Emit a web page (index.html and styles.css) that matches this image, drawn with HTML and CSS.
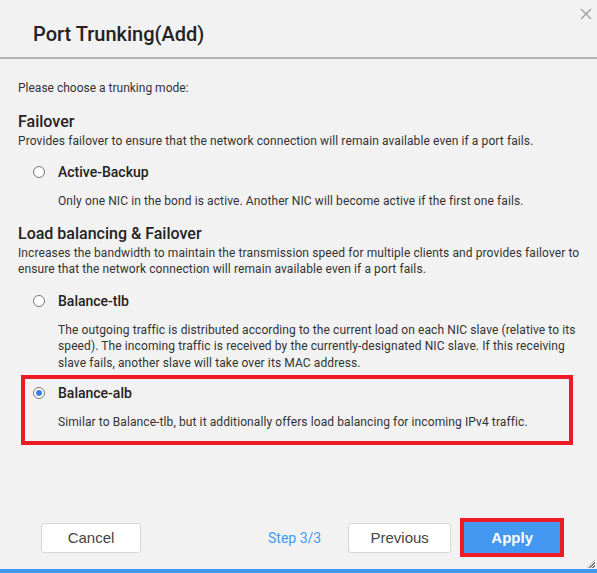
FILE: index.html
```html
<!DOCTYPE html>
<html lang="en-US">
  <head>
    <title>Port Trunking(Add)</title>
    <link rel="stylesheet" href="styles.css">
  </head>
  <body>
    <div class="dialog">
      <div class="dialog-header">
        <h1>Port Trunking(Add)</h1>
        <span class="close" aria-label="Close">
          <svg width="12" height="12" viewBox="0 0 12 12"><path d="M1 1L11 11M11 1L1 11" stroke="#9a9a9a" stroke-width="1.2" fill="none"/></svg>
        </span>
      </div>

      <div class="dialog-body">
        <p class="intro">Please choose a trunking mode:</p>

        <h2>Failover</h2>
        <p class="group-desc">Provides failover to ensure that the network connection will remain available even if a port fails.</p>

        <div class="option">
          <label class="option-title"><span class="radio"></span>Active-Backup</label>
          <p class="option-desc">Only one NIC in the bond is active. Another NIC will become active if the first one fails.</p>
        </div>

        <h2 class="spaced">Load balancing &amp; Failover</h2>
        <p class="group-desc">Increases the bandwidth to maintain the transmission speed for multiple clients and provides failover to ensure that the network connection will remain available even if a port fails.</p>

        <div class="option">
          <label class="option-title"><span class="radio"></span>Balance-tlb</label>
          <p class="option-desc">The outgoing traffic is distributed according to the current load on each NIC slave (relative to its speed). The incoming traffic is received by the currently-designated NIC slave. If this receiving slave fails, another slave will take over its MAC address.</p>
        </div>

        <div class="option selected">
          <label class="option-title"><span class="radio checked"></span>Balance-alb</label>
          <p class="option-desc">Similar to Balance-tlb, but it additionally offers load balancing for incoming IPv4 traffic.</p>
        </div>
      </div>

      <div class="dialog-footer">
        <button class="btn">Cancel</button>
        <span class="step">Step 3/3</span>
        <button class="btn wide">Previous</button>
        <span class="highlight"><button class="btn primary">Apply</button></span>
      </div>
      <span class="grip"></span>
    </div>
  </body>
</html>
```

FILE: styles.css
```css
html, body {
  margin: 0;
  padding: 0;
}

body {
  font-family: Roboto, "Liberation Sans", sans-serif;
  background-color: #f2f2f2;
  color: #333;
}

.dialog {
  position: relative;
  width: 597px;
  height: 573px;
  display: flex;
  flex-direction: column;
  box-sizing: border-box;
  border-bottom: 4px solid #3d9bf0;
}

.dialog-header {
  height: 59px;
  box-sizing: border-box;
  border-bottom: 2px solid #b3b3b3;
  padding: 22px 0 0 33px;
}

.dialog-header h1 {
  margin: 0;
  font-size: 20px;
  line-height: 24px;
  font-weight: 500;
  color: #222;
}

.close {
  position: absolute;
  top: 5px;
  right: 5px;
}

.dialog-body {
  flex: 1;
  padding: 21px 12px 0 18px;
}

.intro {
  margin: 0 0 16px;
  font-size: 12px;
  line-height: 16px;
}

h2 {
  margin: 0 0 2px;
  font-size: 16px;
  font-weight: 500;
  line-height: 19px;
  color: #222;
}

h2.spaced {
  margin-top: 14px;
}

.group-desc,
.option-desc {
  font-size: 12px;
  letter-spacing: 0.1px;
}

.group-desc {
  margin: 0;
  line-height: 16px;
}

.option {
  padding: 14px 6px 0 15px;
}

h2.spaced + .group-desc + .option {
  padding-top: 15px;
}

.option-title {
  display: flex;
  align-items: center;
  font-size: 14px;
  font-weight: 500;
  line-height: 18px;
  color: #222;
}

.radio {
  width: 10px;
  height: 10px;
  border: 1px solid #777;
  border-radius: 50%;
  background: #fff;
  margin: 0 13px 0 0;
  position: relative;
}

.radio.checked::after {
  content: "";
  position: absolute;
  left: 2px;
  top: 2px;
  width: 6px;
  height: 6px;
  border-radius: 50%;
  background: #3d7fe6;
}

.option-desc {
  margin: 12px 0 0 25px;
  line-height: 16.5px;
}

.option.selected {
  border: 4px solid #ed1c24;
  margin: 4px 12px 0 3px;
  padding: 5px 0 0 8px;
}

.option.selected .option-desc {
  margin: 12px 0 10px 25px;
}

.dialog-footer {
  display: flex;
  align-items: center;
  padding: 0 0 12px 41px;
}

.btn {
  font-family: "Liberation Sans", Arial, sans-serif;
  font-size: 15px;
  color: #444;
  background: #fff;
  border: 1px solid #d6d6d6;
  border-radius: 3px;
  width: 100px;
  height: 30px;
  padding: 0;
}

.btn.wide {
  width: 103px;
}

.step {
  color: #3d9bf0;
  font-size: 14px;
  margin: 0 27px 0 127px;
}

.highlight {
  display: inline-flex;
  border: 4px solid #ed1c24;
  margin-left: 9px;
}

.btn.primary {
  background: #4598f2;
  color: #fff;
  border: none;
  border-radius: 0;
  width: 96px;
  height: 31px;
  font-weight: bold;
}

.grip {
  position: absolute;
  right: 2px;
  bottom: 1px;
  width: 8px;
  height: 8px;
  background: repeating-linear-gradient(135deg, transparent 0 1px, #777 1px 2px);
  clip-path: polygon(100% 0, 100% 100%, 0 100%);
}
```
